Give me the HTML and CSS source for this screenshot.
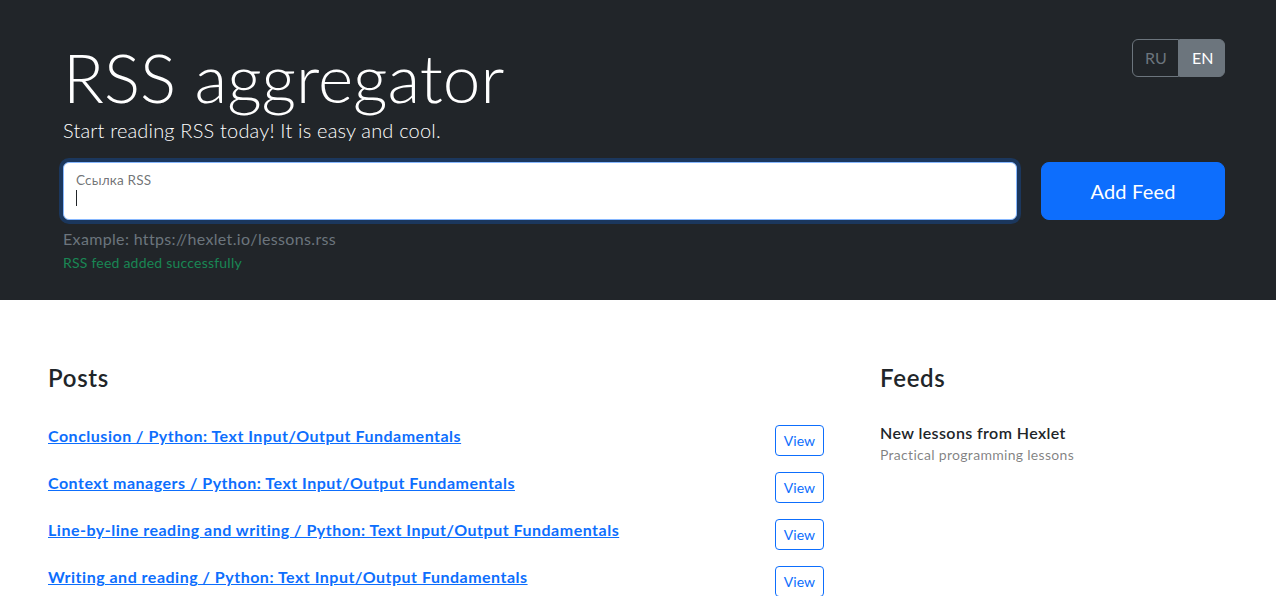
FILE: index.html
```html
<!DOCTYPE html>
<html lang="en">
<head>
<meta charset="utf-8">
<title>RSS aggregator</title>
<link rel="stylesheet" href="styles.css">
</head>
<body>
<header class="hero">
  <div class="hero-top">
    <div class="hero-text">
      <h1 class="title">RSS aggregator</h1>
      <p class="lead">Start reading RSS today! It is easy and cool.</p>
    </div>
    <div class="lang">
      <button class="lang-btn" type="button">RU</button><button class="lang-btn lang-btn-active" type="button">EN</button>
    </div>
  </div>
  <form class="rss-form">
    <div class="field">
      <input id="url-input" class="field-input" type="text" name="url" aria-label="url">
      <label for="url-input" class="field-label">Ссылка RSS</label>
      <span class="caret"></span>
    </div>
    <button class="add-btn" type="submit">Add Feed</button>
  </form>
  <p class="hint">Example: https://hexlet.io/lessons.rss</p>
  <p class="feedback">RSS feed added successfully</p>
</header>
<main class="content">
  <section class="posts">
    <h2 class="section-title">Posts</h2>
    <ul class="list">
      <li class="post"><a class="post-link" href="#">Conclusion / Python: Text Input/Output Fundamentals</a><button class="view-btn" type="button">View</button></li>
      <li class="post"><a class="post-link" href="#">Context managers / Python: Text Input/Output Fundamentals</a><button class="view-btn" type="button">View</button></li>
      <li class="post"><a class="post-link" href="#">Line-by-line reading and writing / Python: Text Input/Output Fundamentals</a><button class="view-btn" type="button">View</button></li>
      <li class="post"><a class="post-link" href="#">Writing and reading / Python: Text Input/Output Fundamentals</a><button class="view-btn" type="button">View</button></li>
    </ul>
  </section>
  <section class="feeds">
    <h2 class="section-title">Feeds</h2>
    <ul class="list">
      <li class="feed">
        <h3 class="feed-title">New lessons from Hexlet</h3>
        <p class="feed-desc">Practical programming lessons</p>
      </li>
    </ul>
  </section>
</main>
</body>
</html>
```

FILE: styles.css
```css
* { box-sizing: border-box; }

html, body {
  margin: 0;
  padding: 0;
}

body {
  font-family: "Lato", "Noto Sans", "DejaVu Sans", sans-serif;
  font-size: 16px;
  line-height: 1.5;
  color: #212529;
  background: #fff;
  overflow: hidden;
}

.hero {
  background: #212529;
  height: 300px;
  padding: 36px 51px 0 63px;
  color: #fff;
}

.hero-top {
  display: flex;
  justify-content: space-between;
  align-items: flex-start;
}

.title {
  margin: 0;
  font-size: 67.5px;
  font-weight: 300;
  line-height: 1.2;
}

.lead {
  margin: -2px 0 0;
  padding-bottom: 1px;
  font-size: 20px;
  font-weight: 300;
  line-height: 1.5;
  letter-spacing: 0.18px;
}

.lang {
  display: flex;
  margin-top: 3px;
}

.lang-btn {
  font: inherit;
  font-size: 16px;
  line-height: 24px;
  padding: 6px 12px;
  border: 1px solid #6c757d;
  background: transparent;
  color: #6c757d;
  width: 47px;
}

.lang-btn:first-child {
  border-radius: 6px 0 0 6px;
}

.lang-btn-active {
  background: #6c757d;
  color: #fff;
  border-radius: 0 6px 6px 0;
  width: 46px;
}

.rss-form {
  display: flex;
  gap: 24px;
  margin-top: 16px;
}

.field {
  position: relative;
  flex: 1;
}

.field-input {
  display: block;
  width: 100%;
  height: 58px;
  padding: 26px 12px 6px;
  font: inherit;
  font-size: 16px;
  border: 1px solid #86b7fe;
  border-radius: 6px;
  background: #fff;
  box-shadow: 0 0 0 4px rgba(13, 110, 253, 0.25);
  outline: none;
}

.field-label {
  position: absolute;
  left: 13px;
  top: 8px;
  font-size: 13.6px;
  line-height: 1.5;
  letter-spacing: 0.15px;
  color: rgba(33, 37, 41, 0.65);
}

.caret {
  position: absolute;
  left: 13px;
  top: 28px;
  width: 1px;
  height: 16px;
  background: #212529;
}

.add-btn {
  width: 184px;
  height: 58px;
  border: 1px solid #0d6efd;
  border-radius: 8px;
  background: #0d6efd;
  color: #fff;
  font: inherit;
  font-size: 20px;
  line-height: 1.5;
  letter-spacing: 0.2px;
}

.hint {
  margin: 7px 0 0;
  font-size: 16px;
  line-height: 24px;
  letter-spacing: 0.34px;
  color: #6c757d;
}

.feedback {
  margin: 1px 0 0;
  font-size: 14px;
  line-height: 21px;
  letter-spacing: 0.22px;
  color: #198754;
}

.content {
  display: grid;
  grid-template-columns: 808px 1fr;
  column-gap: 24px;
  padding: 48px 32px 0;
}

.section-title {
  margin: 0;
  padding: 16px 16px 24px;
  font-size: 24px;
  font-weight: 600;
  line-height: 1.2;
  letter-spacing: 0.7px;
}

.list {
  list-style: none;
  margin: 0;
  padding: 0;
}

.post {
  display: flex;
  justify-content: space-between;
  align-items: flex-start;
  padding: 8px 16px;
}

.post-link {
  color: #0d6efd;
  font-weight: 700;
  text-decoration: underline;
  line-height: 22px;
  letter-spacing: 0.5px;
}

.view-btn {
  font: inherit;
  font-size: 14px;
  line-height: 21px;
  padding: 4px 8px;
  border: 1px solid #0d6efd;
  border-radius: 4px;
  background: transparent;
  color: #0d6efd;
}

.feed {
  padding: 6px 16px 8px;
}

.feed-title {
  margin: 0;
  font-size: 16px;
  font-weight: 600;
  line-height: 1.2;
  letter-spacing: 0.4px;
}

.feed-desc {
  margin: 2px 0 0;
  font-size: 14px;
  line-height: 1.5;
  letter-spacing: 0.3px;
  color: rgba(0, 0, 0, 0.5);
}
```
